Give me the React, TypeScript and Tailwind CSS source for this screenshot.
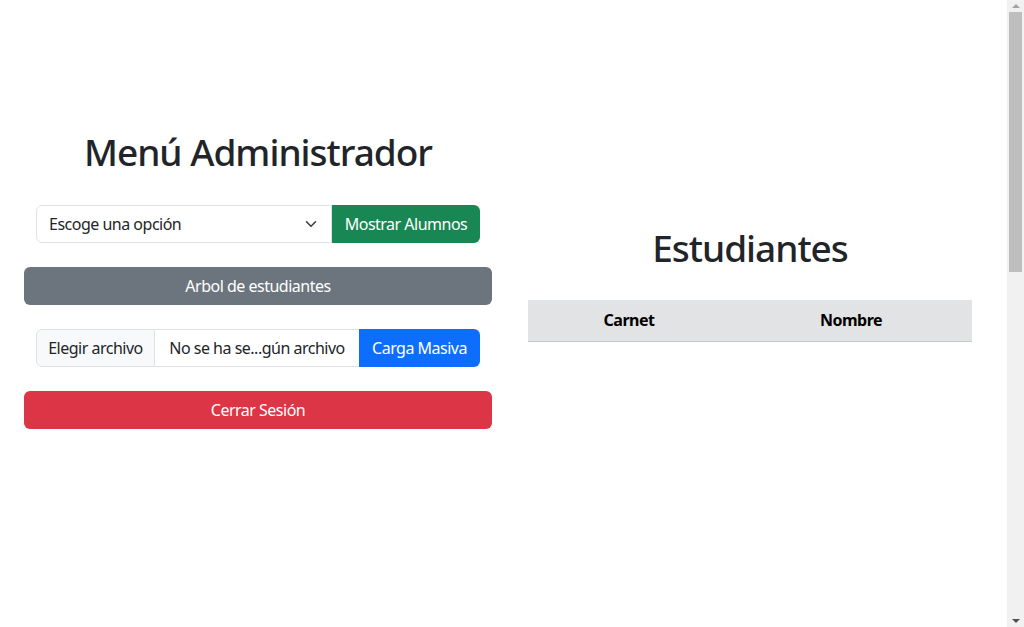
export default function App() {
  const font = { fontFamily: '"Noto Sans", "Open Sans", sans-serif' };

  return (
    <div className="h-screen overflow-hidden bg-white text-[#212529]" style={font}>
      <div className="flex items-start gap-[36px] px-[24px] text-[16px] tracking-[-0.5px]">
        {/* Left column: admin menu */}
        <div className="w-[468px] pt-[128px]">
          <h1 className="text-center text-[37px] font-medium leading-[48px] tracking-[-1px]">Menú Administrador</h1>

          <div className="mx-[12px] mt-[29px] flex h-[38px]">
            <div className="flex flex-1 items-center justify-between rounded-l-[6px] border border-[#dee2e6] px-[12px]">
              <span>Escoge una opción</span>
              <svg viewBox="0 0 16 16" className="h-[12px] w-[16px]" fill="none" stroke="#343a40" strokeWidth="2" strokeLinecap="round" strokeLinejoin="round">
                <path d="m2 5 6 6 6-6" />
              </svg>
            </div>
            <button className="w-[148px] rounded-r-[6px] bg-[#198754] text-white">Mostrar Alumnos</button>
          </div>

          <button className="mt-[24px] h-[38px] w-full rounded-[6px] bg-[#6c757d] text-white">
            Arbol de estudiantes
          </button>

          <div className="mx-[12px] mt-[24px] flex h-[38px]">
            <div className="flex w-[119px] items-center justify-center rounded-l-[6px] border border-[#dee2e6] bg-[#f8f9fa]">
              Elegir archivo
            </div>
            <div className="flex flex-1 items-center justify-center border-y border-[#dee2e6]">
              No se ha se...gún archivo
            </div>
            <button className="w-[121px] rounded-r-[6px] bg-[#0d6efd] text-white">Carga Masiva</button>
          </div>

          <button className="mt-[24px] h-[38px] w-full rounded-[6px] bg-[#dc3545] text-white">
            Cerrar Sesión
          </button>
        </div>

        {/* Right column: students table */}
        <div className="w-[444px] pt-[224px]">
          <h1 className="text-center text-[37px] font-medium leading-[48px] tracking-[-1px]">Estudiantes</h1>
          <table className="mt-[28px] w-full border-collapse">
            <thead>
              <tr className="h-[41px] border-b border-[#c6c7c8] bg-[#e2e3e5] text-black">
                <th className="w-[202px] text-center font-bold">Carnet</th>
                <th className="text-center font-bold">Nombre</th>
              </tr>
            </thead>
          </table>
        </div>
      </div>

      {/* Browser scrollbar */}
      <div className="fixed right-0 top-0 flex h-screen w-[17px] flex-col items-center bg-[#f1f1f1]">
        <div className="mt-[4px] h-0 w-0 border-x-[4px] border-b-[4px] border-x-transparent border-b-[#a3a3a3]" />
        <div className="mt-[4px] h-[260px] w-[13px] bg-[#bebebe]" />
        <div className="mt-auto mb-[4px] h-0 w-0 border-x-[4px] border-t-[4px] border-x-transparent border-t-[#505050]" />
      </div>
    </div>
  );
}
